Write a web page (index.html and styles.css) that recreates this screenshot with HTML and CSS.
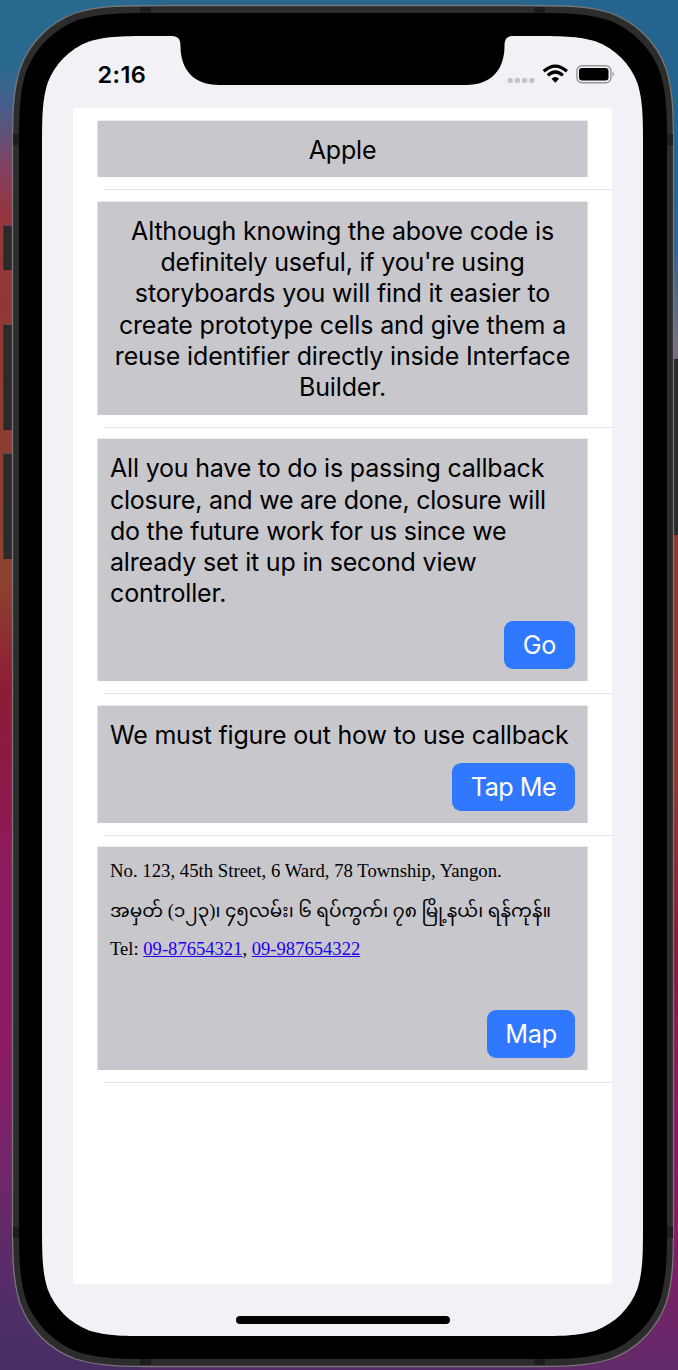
FILE: index.html
```html
<!DOCTYPE html>
<html lang="en">
<head>
<meta charset="utf-8">
<title>Table view</title>
<link rel="stylesheet" href="styles.css">
</head>
<body>
<div class="desktop">
  <svg class="device" width="678" height="1370" viewBox="0 0 678 1370" aria-hidden="true">
    <g fill="#2b2b2b" stroke="#252525" stroke-width="1">
      <rect x="4" y="225.5" width="10" height="44"/>
      <rect x="4" y="324.5" width="10" height="105"/>
      <rect x="4" y="453.5" width="10" height="105"/>
      <rect x="672" y="359.500" width="12" height="175"/>
    </g>
    <path d="M4 225.500h8M4 324.500h8M4 453.500h8" stroke="#505050"/>
    <path class="shell" d="M12.500 158.500c0-44 0-66 7.500-90c9.500-26 29.500-46 55.500-55.500c24-7.500 46-7.500 90-7.500H520.500c44 0 66 0 90 7.500c26 9.500 46 29.500 55.500 55.500c7.500 24 7.500 46 7.500 90V1213.500c0 44 0 66-7.500 90c-9.500 26-29.500 46-55.500 55.500c-24 7.500-46 7.500-90 7.500H165.500c-44 0-66 0-90-7.500c-26-9.500-46-29.500-55.500-55.500c-7.500-24-7.500-46-7.500-90z"/>
    <path d="M140 7h11v6h-11zM534 7h11v6h-11zM140 1359h11v6h-11zM534 1359h11v6h-11zM13 134h6v11h-6zM667 134h6v11h-6zM13 1227h6v11h-6zM667 1227h6v11h-6z" fill="#1d1d1d"/>
    <path d="M19 156c0-41 0-61 7-84c9-24 28-43 52-52c23-7 43-7 84-7H524c41 0 61 0 84 7c24 9 43 28 52 52c7 23 7 43 7 84V1216c0 41 0 61-7 84c-9 24-28 43-52 52c-23 7-43 7-84 7H162c-41 0-61 0-84-7c-24-9-43-28-52-52c-7-23-7-43-7-84z"/>
    <path fill="#f2f1f6" d="M42 151c0-33 0-50 5.600-68c7.100-19 22.400-34.300 41.400-41.400c18-5.600 35-5.600 68-5.600H528c33 0 50 0 68 5.600c19 7.100 34.300 22.400 41.400 41.400c5.600 18 5.600 35 5.600 68V1221c0 33 0 50-5.600 68c-7.100 19-22.400 34.300-41.400 41.400c-18 5.600-35 5.600-68 5.600H157c-33 0-50 0-68-5.600c-19-7.100-34.300-22.400-41.400-41.400c-5.600-18-5.600-35-5.600-68z"/>
    <path d="M172 35.900C178 36 180.500 39 180.500 46C180.500 70 194 85 219 85H466C491 85 504.500 70 504.500 46C504.500 39 507 36 513 35.900z"/>
  </svg>
  <main class="screen">
    <header class="status">
      <span class="time">2:16</span>
      <svg class="indicators" width="112" height="26" viewBox="0 0 112 26" aria-label="Network and battery">
        <g fill="#c5c4c9"><rect x="5.700" y="16" width="5" height="5" rx="1.300"/><rect x="12.900" y="16" width="5" height="5" rx="1.300"/><rect x="20.100" y="16" width="5" height="5" rx="1.300"/><rect x="27.300" y="16" width="5" height="5" rx="1.300"/></g>
        <g fill="none" stroke="#000" stroke-width="3.200"><path d="M41.700 9.300Q53.300-1 64.900 9.300"/><path d="M45.700 13.400Q53.300 6.600 60.900 13.400"/></g>
        <path d="M49.500 16.700Q53.300 13.300 57.100 16.700L53.300 20.700z"/>
        <rect x="74.900" y="3.700" width="34" height="17" rx="5" fill="none" stroke="#97969b" stroke-width="1.400"/>
        <rect x="77" y="6" width="29.500" height="12.500" rx="3"/>
        <path d="M110.500 9.500q3 2.700 0 5.400z" fill="#97969b"/>
      </svg>
    </header>
    <section class="list">
      <article class="cell"><div class="card title"><span>Apple</span></div></article>
      <article class="cell"><div class="card intro"><span class="tight">Although knowing the above code is</span><span class="tight">definitely useful, if you're using</span><span>storyboards you will find it easier to</span><span>create prototype cells and give them a</span><span>reuse identifier directly inside Interface</span><span>Builder.</span></div></article>
      <article class="cell"><div class="card closure"><span class="tight">All you have to do is passing callback</span><span class="tighter">closure, and we are done, closure will</span><span class="tighter">do the future work for us since we</span><span class="tight">already set it up in second view</span><span>controller.</span><button class="button go">Go</button></div></article>
      <article class="cell"><div class="card callback"><span class="tight">We must figure out how to use callback</span><button class="button tap">Tap Me</button></div></article>
      <article class="cell"><div class="card address">
        <p>No. 123, 45th Street, 6 Ward, 78 Township, Yangon.</p>
        <p class="burmese" lang="my">အမှတ် (၁၂၃)၊ ၄၅လမ်း၊ ၆ ရပ်ကွက်၊ ၇၈ မြို့နယ်၊ ရန်ကုန်။</p>
        <p class="phones">Tel: <a href="tel:09-87654321">09-87654321</a>, <a href="tel:09-987654322">09-987654322</a></p>
        <button class="button map">Map</button>
      </div></article>
    </section>
    <div class="home"></div>
  </main>
</div>
</body>
</html>
```

FILE: styles.css
```css
* { box-sizing: border-box; }
body { margin: 0; font-family: Inter, "Liberation Sans", sans-serif; color: #000; }
.desktop {
  position: relative;
  width: 678px;
  height: 1370px;
  padding: 36px 35px 34px 42px;
  overflow: hidden;
  background:
    linear-gradient(180deg, #25648f 0, #25648f 180px, #35628f 250px, #777080 345px, #903733 500px, #8e3933 780px, #8e1c3a 930px, #8e1765 1120px, #8c1867 1210px, #612b69 1370px) right / 140px 100% no-repeat,
    linear-gradient(180deg, #29698f 0, #29698f 65px, #465f8c 105px, #833f60 170px, #96353e 215px, #8e3933 340px, #8d4230 580px, #8e1b35 690px, #8e195f 880px, #8c1a66 1050px, #6c276a 1190px, #4f2f68 1310px, #482d64 1370px) left / 140px 100% no-repeat,
    linear-gradient(180deg, #26668f 0 50%, #532c68 50% 100%);
}
.device { position: absolute; left: 0; top: 0; }
.shell { fill: #2c2c2c; stroke: #777; stroke-width: 1.3; }
.screen { position: relative; display: flex; flex-direction: column; height: 1300px; }
.status { display: flex; justify-content: space-between; height: 72px; padding: 25px 29.500px 0 55.500px; }
.time { font-size: 23.500px; line-height: 28px; font-weight: 600; letter-spacing: .4px; }
.indicators { flex: none; margin-top: 1px; }
.list { width: 539px; height: 1176px; margin-left: 31px; padding-top: 1px; background: #fff; }
.cell { padding: 11.500px 24px 13px 25px; background: linear-gradient(#e3e3e5, #e3e3e5) right bottom / 508px 1px no-repeat; }
.card { display: flex; flex-direction: column; align-items: flex-start; padding: 14.300px 12px 12px; border-right: 1px solid #dddde0; background: #c8c7cc; box-shadow: -1px 0 #e0e0e3, 0 -1px #ececee; font-size: 25px; line-height: 31.250px; letter-spacing: -.15px; white-space: nowrap; }
.tight { letter-spacing: -.19px; }
.tighter { letter-spacing: -.24px; }
.title, .intro { align-items: center; }
.title { height: 56.500px; }
.intro { height: 213px; }
.closure { height: 242px; }
.callback { height: 117px; }
.address { height: 223px; padding-top: 13px; font-family: "Liberation Serif", "Noto Sans Myanmar", Padauk, serif; font-size: 18.750px; line-height: 22px; letter-spacing: 0; }
.address p { margin: 0 0 17px; }
.address .burmese { height: 22px; font-size: 18.500px; line-height: 24px; }
.address .phones { font-size: 18.600px; line-height: 22px; }
.address a { color: #2200ee; }
.button { align-self: flex-end; margin: auto 0 0; height: 48px; padding: 0; border: 0; border-radius: 9px; background: #3078ff; color: #fff; font: 25.200px/49px Inter, sans-serif; letter-spacing: -.2px; }
.go { width: 71px; }
.tap { width: 123px; letter-spacing: -.5px; }
.map { width: 88px; }
.home { width: 214px; height: 8px; margin: 32px 0 0 194px; border-radius: 4px; background: #000; }
```
